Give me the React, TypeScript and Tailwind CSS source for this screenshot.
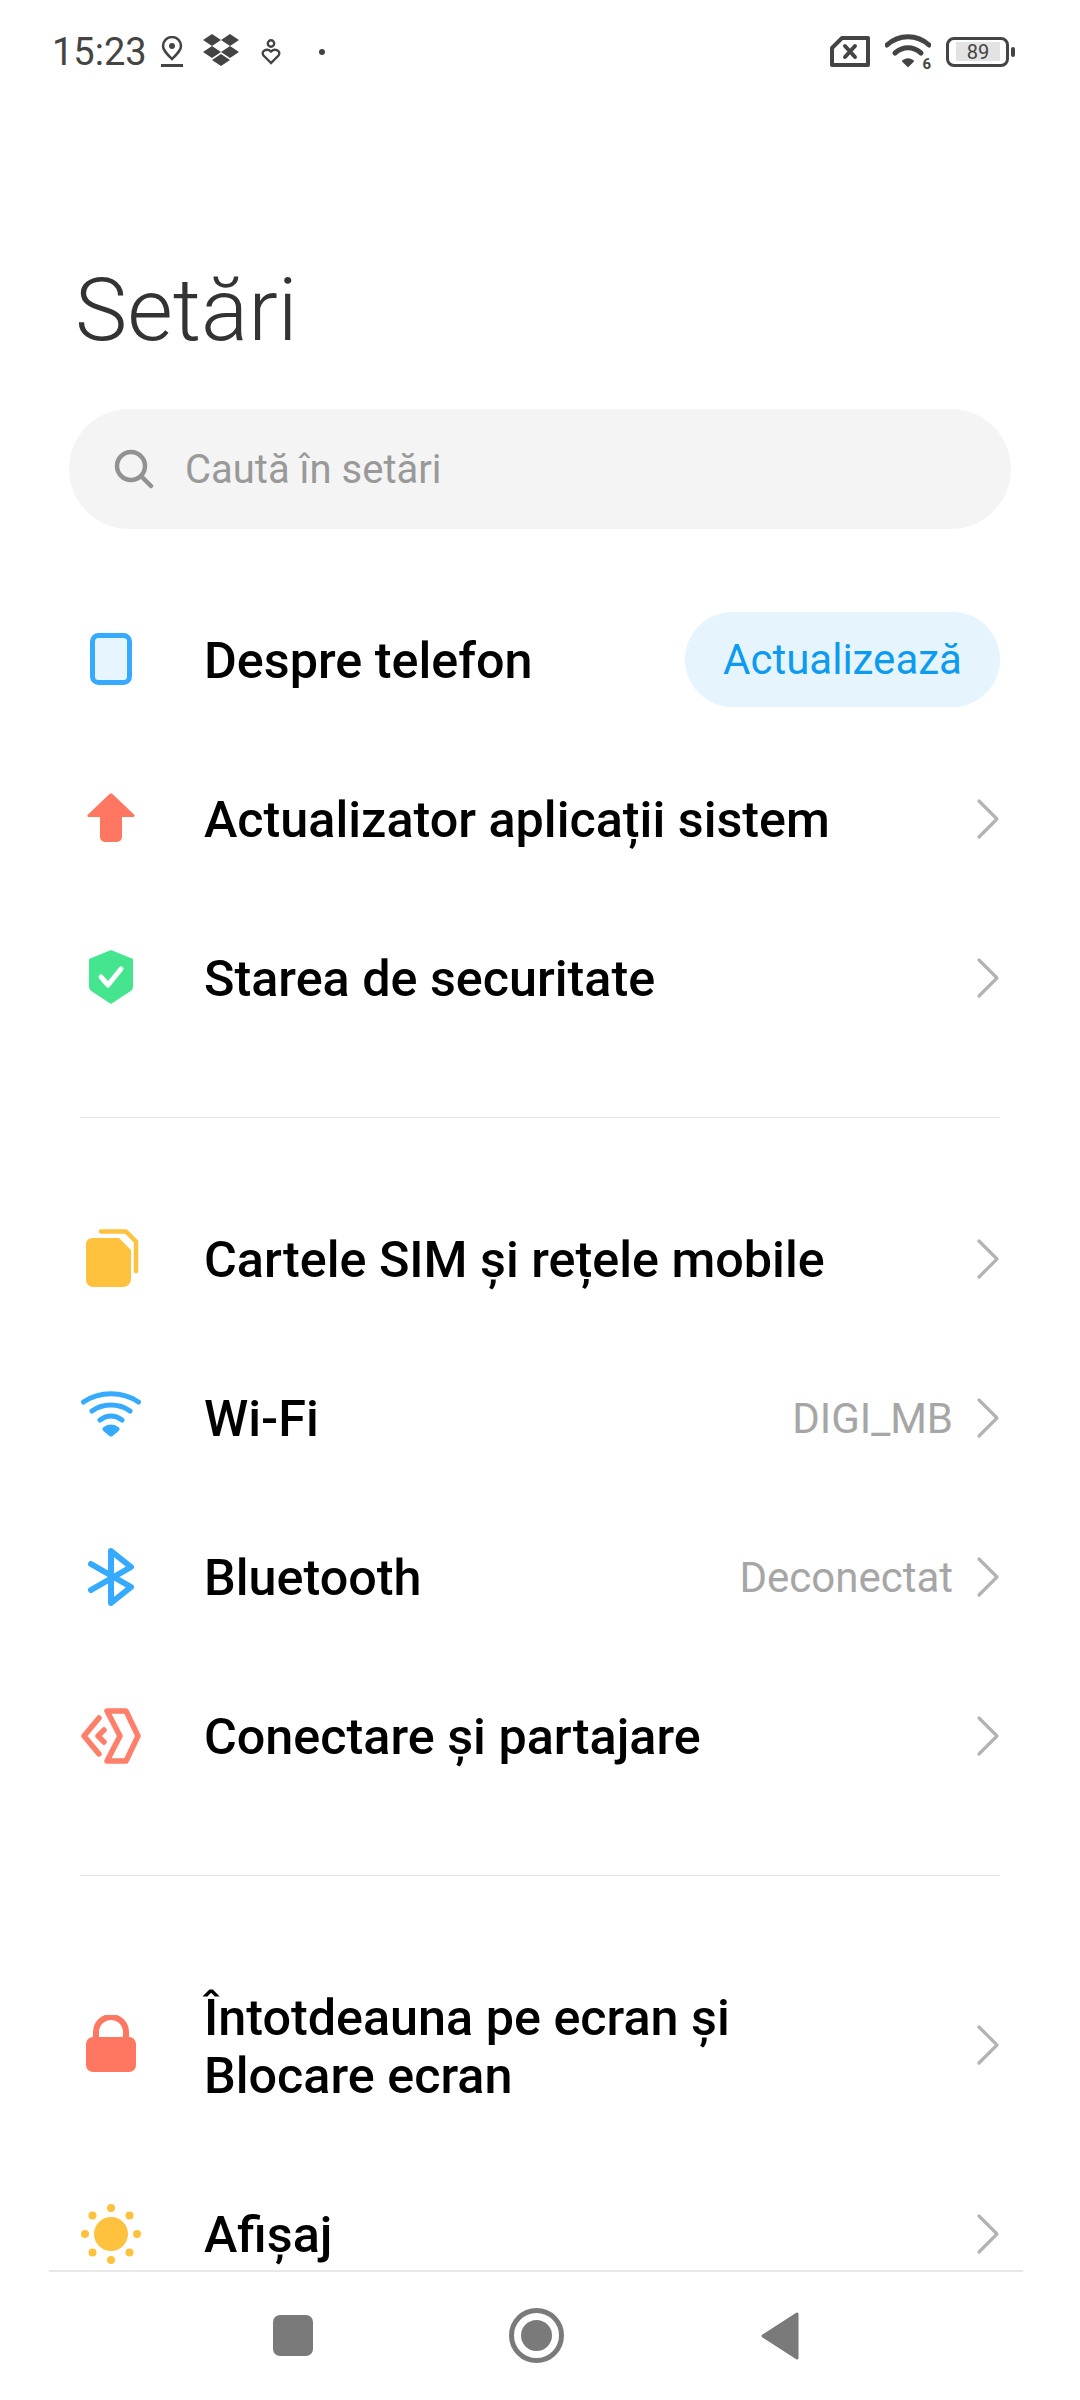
import type { ReactNode } from 'react';

const FONT = "font-['Roboto','Noto_Sans',sans-serif]";

function Chevron() {
    return (
        <svg width="24" height="42" viewBox="0 0 24 42" fill="none" stroke="#b3b3b3" strokeWidth="3.2" strokeLinecap="round" strokeLinejoin="round">
            <path d="M3 3l18 18L3 39" />
        </svg>
    );
}

const PhoneIcon = () => (
    <svg width="60" height="60" viewBox="0 0 60 60">
        <rect x="11.5" y="5.500" width="37" height="47" rx="6" fill="#e6f5ff" stroke="#35aaff" strokeWidth="5" />
    </svg>
);
const ArrowIcon = () => (
    <svg width="60" height="60" viewBox="0 0 60 60">
        <path d="M28 5.500a3 3 0 0 1 4 0L53 25.500c1.300 1.500.6 2.500-1 2.500H41v20a5 5 0 0 1-5 5H24a5 5 0 0 1-5-5V28H8c-1.600 0-2.300-1-1-2.500z" fill="#ff7760" />
    </svg>
);
const ShieldIcon = () => (
    <svg width="60" height="60" viewBox="0 0 60 60">
        <path d="M30 2l22 9v27c0 3-1 4-3 5.500L30 56 11 43.500C9 42 8 41 8 38V11z" fill="#45e58f" />
        <path d="M20 29l7 8 13-16" fill="none" stroke="#fff" strokeWidth="5" strokeLinecap="round" strokeLinejoin="round" />
    </svg>
);
const SimIcon = () => (
    <svg width="60" height="60" viewBox="0 0 60 60">
        <path d="M11 9h27l12 12v29a8 8 0 0 1-8 8H12a7 7 0 0 1-7-7V15a6 6 0 0 1 6-6z" fill="#ffc23f" />
        <path d="M20 2.500h25l10 10V42" fill="none" stroke="#ffc23f" strokeWidth="4.500" strokeLinecap="round" strokeLinejoin="round" />
    </svg>
);
const WifiIcon = () => (
    <svg width="60" height="60" viewBox="0 0 60 60" fill="none" stroke="#35aaff" strokeWidth="5" strokeLinecap="round">
        <path d="M2.500 14c16-11 39-11 55 0" />
        <path d="M11 23c11-8 27-8 38 0" />
        <path d="M19 32c7-5 15-5 22 0" />
        <path d="M24 41c4-2.500 8-2.500 12 0l-6 5z" fill="#35aaff" strokeLinejoin="round" />
    </svg>
);
const BluetoothIcon = () => (
    <svg width="60" height="60" viewBox="0 0 60 60" fill="none" stroke="#35aaff" strokeWidth="6" strokeLinecap="round" strokeLinejoin="round">
        <path d="M10 17l40 23-20 16V4l20 16-40 23" />
    </svg>
);
const ConnectIcon = () => (
    <svg width="60" height="60" viewBox="0 0 60 60" fill="none" stroke="#ff7f6b" strokeWidth="5.500" strokeLinecap="round" strokeLinejoin="round">
        <path d="M18 12L3 30l15 18" />
        <path d="M23 24l-6 6 6 6" />
        <path d="M26 5h19l12 25-12 25H26l13-25z" />
    </svg>
);
const LockIcon = () => (
    <svg width="60" height="60" viewBox="0 0 60 60">
        <path d="M15 26V17a15 15 0 0 1 30 0v9" fill="none" stroke="#ff7760" strokeWidth="6" />
        <rect x="5" y="22" width="50" height="35" rx="7" fill="#ff7760" />
    </svg>
);
const SunIcon = () => (
    <svg width="60" height="60" viewBox="0 0 60 60" fill="#ffc23f">
        <circle cx="30" cy="30" r="17" />
        <circle cx="30" cy="4" r="4" />
        <circle cx="30" cy="56" r="4" />
        <circle cx="4" cy="30" r="4" />
        <circle cx="56" cy="30" r="4" />
        <circle cx="11.500" cy="11.500" r="4" />
        <circle cx="48.500" cy="11.500" r="4" />
        <circle cx="11.500" cy="48.500" r="4" />
        <circle cx="48.500" cy="48.500" r="4" />
    </svg>
);

function Row({ icon, children, value, height = 'h-[159px]' }: { icon: ReactNode; children: ReactNode; value?: string; height?: string }) {
    return (
        <div className={`flex items-center pl-[81px] pr-[80px] ${height}`}>
            <div className="w-[60px] h-[60px] shrink-0">{icon}</div>
            <div className="ml-[63px] flex-1 pt-[3px] text-[50.3px] leading-[58px] font-medium text-black">{children}</div>
            {value && <span className="mr-[23px] pt-[2px] text-[42px] text-[#a6a6a6]">{value}</span>}
            <Chevron />
        </div>
    );
}

function StatusBar() {
    return (
        <div className="flex h-[104px] items-center pl-[52px] pr-[65px] pb-[1px] text-[#444]">
            <span className="text-[38px] leading-none">15:23</span>
            <svg className="ml-[14px]" width="22" height="31" viewBox="0 0 22 31" fill="none" stroke="#444">
                <path d="M11 23C6 18 2 14.500 2 10a9 9 0 0 1 18 0c0 4.500-4 8-9 13z" strokeWidth="2.500" />
                <circle cx="11" cy="10" r="3" fill="#444" stroke="none" />
                <path d="M0 29.500h22" strokeWidth="3" />
            </svg>
            <svg className="ml-[20px] mb-[4px]" width="36" height="32" viewBox="0 0 36 32" fill="#444">
                <path d="M9 0l9 6-9 6-9-6zM27 0l9 6-9 6-9-6zM9 12l9 6-9 6-9-6zM27 12l9 6-9 6-9-6zM18 20l9 6-9 6-9-6z" />
            </svg>
            <svg className="ml-[22px]" width="20" height="26" viewBox="0 0 20 26" fill="none" stroke="#444" strokeWidth="2.400">
                <circle cx="10" cy="4.500" r="3.200" />
                <path d="M10 24L2.500 16.500c-3-4 3-8 7.500-4 4.500-4 10.500 0 7.500 4z" />
            </svg>
            <span className="ml-[38px] w-[6px] h-[6px] rounded-full bg-[#444]" />
            <div className="flex-1" />
            <svg width="40" height="31" viewBox="0 0 40 31" fill="none" stroke="#444" strokeWidth="4" strokeLinejoin="round">
                <path d="M12 2h26v27H2V12z" />
                <path d="M15 10l10 11M25 10L15 21" strokeLinecap="round" />
            </svg>
            <div className="relative ml-[15px] w-[46px] h-[35px]">
                <svg width="46" height="35" viewBox="0 0 46 35" fill="none" stroke="#444" strokeLinecap="round">
                    <path d="M2 11c12-11 30-11 42 0" strokeWidth="5" />
                    <path d="M10 19c8-7 18-7 26 0" strokeWidth="5" />
                    <path d="M18 27c3-2 7-2 10 0l-5 5z" fill="#444" strokeWidth="2" strokeLinejoin="round" />
                </svg>
                <span className="absolute right-0 bottom-[-3px] text-[15px] leading-none font-bold">6</span>
            </div>
            <div className="ml-[15px] flex h-[30px] w-[63px] items-center justify-center rounded-[8px] border-[3.5px] border-[#444] pl-[1px]">
                <span className="flex h-[19px] w-[44px] items-center justify-center bg-[#e3e3e3] text-[20px] leading-none">89</span>
            </div>
            <span className="ml-[2px] h-[10px] w-[4px] rounded-full bg-[#444]" />
        </div>
    );
}

function Divider() {
    return <div className="mx-[80px] h-[1px] bg-[#e2e2e2]" />;
}

export default function App() {
    return (
        <div className={`flex h-[2400px] w-[1080px] flex-col overflow-hidden bg-white ${FONT}`}>
            <StatusBar />

            {/* 内容 */}
            <div className="flex-1 overflow-hidden">
                <h1 className="mt-[158px] ml-[75px] text-[88px] leading-[96px] font-light text-[#333]">Setări</h1>

                <div className="mt-[51px] mx-[69px] flex h-[120px] items-center rounded-full bg-[#f4f4f4] pl-[45px]">
                    <svg width="40" height="40" viewBox="0 0 40 40" fill="none" stroke="#929292" strokeWidth="4.500" strokeLinecap="round">
                        <circle cx="17" cy="17" r="14" />
                        <path d="M27 27l10 10" />
                    </svg>
                    <span className="ml-[31px] pt-[2px] text-[40px] text-[#999]">Caută în setări</span>
                </div>

                <div className="mt-[51px]">
                    <div className="flex h-[159px] items-center pl-[81px] pr-[80px]">
                        <div className="w-[60px] h-[60px] shrink-0"><PhoneIcon /></div>
                        <div className="ml-[63px] flex-1 pt-[3px] text-[50.3px] font-medium text-black">Despre telefon</div>
                        <div className="flex h-[95px] w-[315px] items-center justify-center rounded-full bg-[#e6f4fd] text-[42px] text-[#0d9bf0]">Actualizează</div>
                    </div>
                    <Row icon={<ArrowIcon />}>Actualizator aplicații sistem</Row>
                    <Row icon={<ShieldIcon />}>Starea de securitate</Row>
                </div>

                <div className="mt-[60px]"><Divider /></div>

                <div className="mt-[61px]">
                    <Row icon={<SimIcon />}>Cartele SIM și rețele mobile</Row>
                    <Row icon={<WifiIcon />} value="DIGI_MB">Wi-Fi</Row>
                    <Row icon={<BluetoothIcon />} value="Deconectat">Bluetooth</Row>
                    <Row icon={<ConnectIcon />}>Conectare și partajare</Row>
                </div>

                <div className="mt-[60px]"><Divider /></div>

                <div className="mt-[60px]">
                    <Row icon={<LockIcon />} height="h-[218px]">Întotdeauna pe ecran și<br />Blocare ecran</Row>
                    <Row icon={<SunIcon />}>Afișaj</Row>
                </div>
            </div>

            {/* 底部导航 */}
            <div className="ml-[49px] mr-[57px] flex h-[130px] items-start border-t-[2px] border-[#e8e8e8] bg-white pt-[36px] pl-[224px]">
                <span className="mt-[7px] h-[41px] w-[40px] rounded-[7px] bg-[#7a7a7a]" />
                <span className="ml-[196px] flex h-[55px] w-[55px] items-center justify-center rounded-full border-[5px] border-[#7a7a7a]">
                    <span className="h-[31px] w-[31px] rounded-full bg-[#7a7a7a]" />
                </span>
                <svg className="ml-[197px] mt-[4px]" width="38" height="48" viewBox="0 0 38 48" fill="#7a7a7a" stroke="#7a7a7a" strokeWidth="3" strokeLinejoin="round">
                    <path d="M2 24L36 2v44z" />
                </svg>
            </div>
        </div>
    );
}
